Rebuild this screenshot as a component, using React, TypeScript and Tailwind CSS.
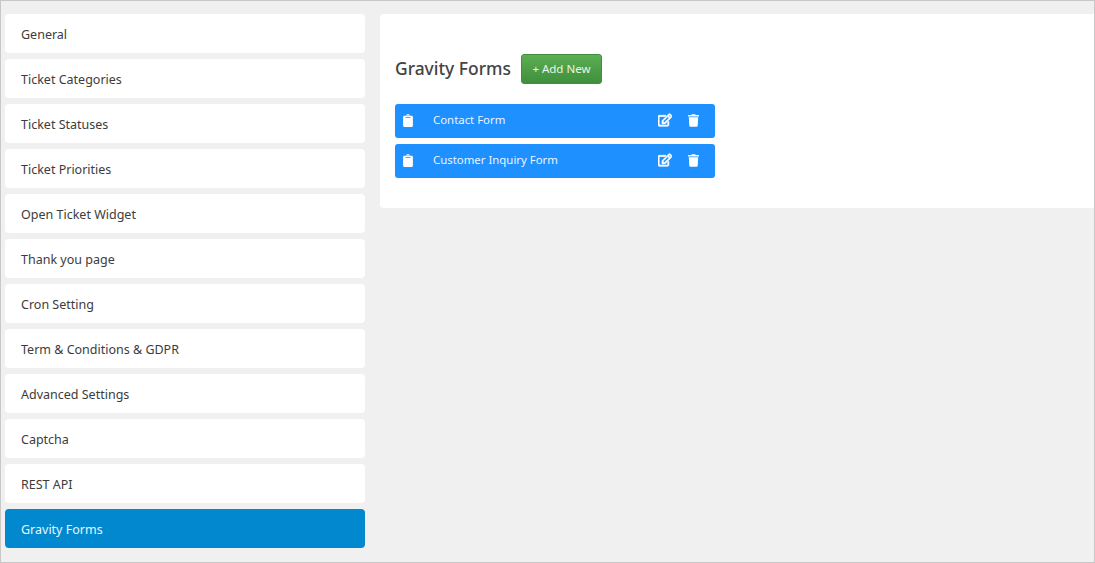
import { FaClipboard, FaRegEdit, FaTrash } from "react-icons/fa";

const tabs = [
  "General",
  "Ticket Categories",
  "Ticket Statuses",
  "Ticket Priorities",
  "Open Ticket Widget",
  "Thank you page",
  "Cron Setting",
  "Term & Conditions & GDPR",
  "Advanced Settings",
  "Captcha",
  "REST API",
  "Gravity Forms",
];

const forms = ["Contact Form", "Customer Inquiry Form"];

export default function App() {
  return (
    <div className="h-[563px] w-[1095px] overflow-hidden border border-[#c8c8c8] bg-[#f0f0f0] font-['Noto_Sans',sans-serif] text-[12.5px]">
      <div className="flex items-start pl-1 pt-[13px]">
        <div className="flex w-[360px] flex-col gap-1.5">
          {tabs.map((t) => (
            <div
              key={t}
              className={`flex h-[39px] items-center rounded-[4px] pl-4 pt-1 ${
                t === "Gravity Forms" ? "bg-[#0288ce] text-[#e6f6ff]" : "bg-white text-[#3c3c3c]"
              }`}
            >
              {t}
            </div>
          ))}
        </div>
        <div className="ml-[15px] h-[194px] flex-1 rounded-l-[4px] bg-white pl-[15px] pt-10">
          <div className="flex h-[30px] items-center gap-2.5">
            <h2 className="text-[17.4px] font-medium leading-none text-[#444444]">Gravity Forms</h2>
            <button className="h-[30px] w-[81px] rounded-[3px] border border-[#3f8f3f] bg-gradient-to-b from-[#5cae52] to-[#3f8f3d] text-[11.5px] text-[#e9f5e8]">
              + Add New
            </button>
          </div>
          <div className="mt-5 flex w-[320px] flex-col gap-1.5">
            {forms.map((f) => (
              <div key={f} className="flex h-[34px] items-center rounded-[3px] bg-[#1e90ff] pl-2 text-[11.4px] text-[#eaf5ff]">
                <FaClipboard className="h-[13px] w-2.5 -translate-y-px text-white" />
                <span className="ml-[20px] flex-1 -translate-y-px">{f}</span>
                <FaRegEdit className="h-3.5 w-3.5 -translate-x-px -translate-y-px stroke-[30px] text-white" />
                <FaTrash className="ml-[15px] mr-4 h-[13px] w-[11px] -translate-y-px text-white" />
              </div>
            ))}
          </div>
        </div>
      </div>
    </div>
  );
}
